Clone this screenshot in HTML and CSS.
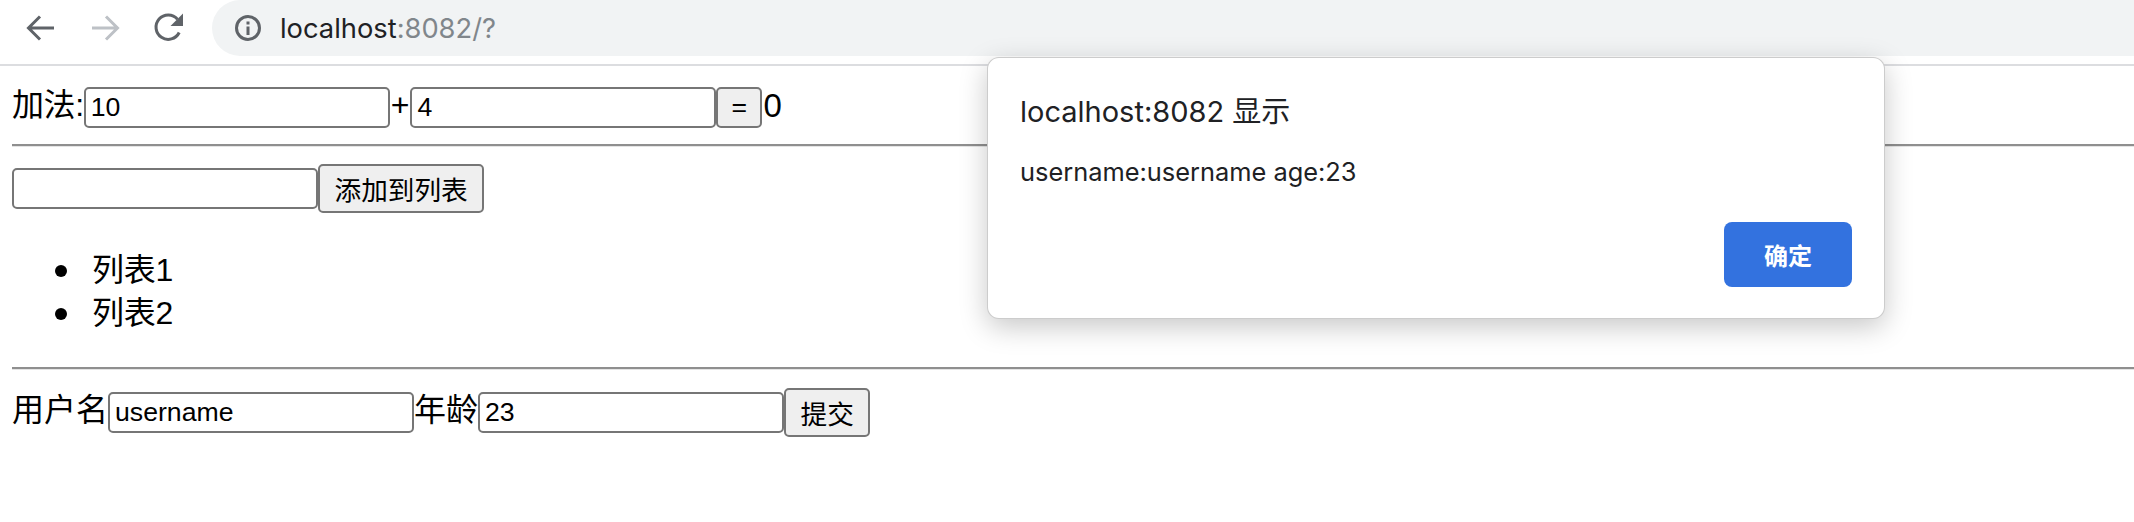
FILE: index.html
```html
<!DOCTYPE html>
<html lang="zh">
<head>
<meta charset="utf-8">
<title>localhost:8082</title>
<link rel="stylesheet" href="styles.css">
</head>
<body>
<header class="toolbar">
  <div class="nav">
    <svg class="nav-icon" viewBox="0 0 32 32"><path class="stroke dark" d="M29 16H4M15 4.500 3.500 16 15 27.500"/></svg>
    <svg class="nav-icon" viewBox="0 0 32 32"><path class="stroke light" d="M3 16H28M17 4.500 28.500 16 17 27.500"/></svg>
    <svg class="nav-icon" viewBox="0 0 32 32"><path class="stroke dark" d="M26.200 20.500A12.200 12.200 0 1 1 24.500 7.200"/><path class="fill-dark" d="M30 1.500V14H17.500Z"/></svg>
  </div>
  <div class="omnibox">
    <svg class="info" viewBox="0 0 28 28"><circle class="stroke dark" cx="14" cy="14" r="11.500"/><path class="fill-dark" d="M12.500 12.500h3V21h-3zM12.500 7.500h3v3h-3z"/></svg>
    <span class="url">localhost<span class="url-muted">:8082/?</span></span>
  </div>
</header>
<main class="page">
  <div class="row row-add">
    <span class="label label-tight">加法:</span><input class="field" value="10"><span class="label label-plus">+</span><input class="field" value="4"><button class="btn btn-eq">=</button><span class="label label-sum">0</span>
  </div>
  <hr class="rule">
  <div class="row row-list">
    <input class="field"><button class="btn">添加到列表</button>
  </div>
  <ul class="items">
    <li>列表1</li>
    <li>列表2</li>
  </ul>
  <hr class="rule rule-second">
  <div class="row row-form">
    <span class="label">用户名</span><input class="field" value="username"><span class="label">年龄</span><input class="field" value="23"><button class="btn">提交</button>
  </div>
</main>
<div class="dialog">
  <div class="dialog-title">localhost:8082 显示</div>
  <div class="dialog-msg">username:username age:23</div>
  <div class="dialog-actions"><button class="dialog-ok">确定</button></div>
</div>
</body>
</html>
```
FILE: styles.css
```css
* { box-sizing: border-box; }
html, body { margin: 0; padding: 0; }
body {
  background: #fff;
  color: #000;
  font-family: "Liberation Sans", "Noto Sans CJK SC", sans-serif;
  font-size: 32px;
  overflow: hidden;
}
.toolbar {
  height: 66px;
  border-bottom: 2px solid #dcdde0;
  display: flex;
  align-items: flex-start;
}
.nav {
  width: 212px;
  flex: none;
  display: flex;
  gap: 32px;
  padding: 12px 0 0 25px;
}
.nav-icon { width: 32px; height: 32px; flex: none; }
.stroke { fill: none; stroke-width: 3; }
.dark { stroke: #5f6368; }
.light { stroke: #bdc1c6; }
.fill-dark { fill: #5f6368; }
.omnibox {
  flex: 1;
  height: 56px;
  background: #f1f3f4;
  border-radius: 30px 0 0 30px;
  display: flex;
  align-items: center;
  padding-left: 22px;
  gap: 18px;
}
.info { width: 28px; height: 28px; flex: none; }
.url {
  font-family: "Inter", sans-serif;
  font-size: 27.300px;
  color: #202124;
}
.url-muted { color: #80868b; }
.page { padding-left: 12px; }
.row { display: flex; align-items: center; height: 49px; }
.label { line-height: 43px; padding-bottom: 4px; }
.label-tight { letter-spacing: -.4px; }
.label-plus { margin: 0 1px; }
.label-sum { margin-left: 1px; font-size: 33px; }
.row-add { margin-top: 18px; height: 47px; }
.row-list { margin-top: 17px; }
.row-form { margin-top: 18px; }
.field {
  width: 306px;
  height: 41px;
  border: 2px solid #767676;
  border-radius: 5px;
  padding: 2px 5px;
  font-family: "Liberation Sans", sans-serif;
  font-size: 26.670px;
  background: #fff;
  color: #000;
  flex: none;
}
.btn {
  height: 49px;
  border: 2px solid #767676;
  border-radius: 5px;
  background: #efefef;
  color: #000;
  padding: 0 14.500px;
  font-family: "Liberation Sans", "Noto Sans CJK SC", sans-serif;
  font-size: 26.670px;
  flex: none;
}
.btn-eq { height: 41px; width: 46px; padding: 0; }
.rule {
  border: 0;
  height: 3px;
  margin: 13px 0 0;
  background: linear-gradient(#8f8f8f 0 2px, #e4e4e4 2px);
}
.items {
  list-style: none;
  margin: 36px 0 0;
  padding: 0 0 0 80px;
  line-height: 43px;
  letter-spacing: -.3px;
}
.items li { position: relative; }
.items li::before {
  content: "";
  position: absolute;
  left: -37px;
  top: 16px;
  width: 12px;
  height: 12px;
  border-radius: 50%;
  background: #000;
}
.rule-second { margin-top: 32px; }
.dialog {
  position: absolute;
  left: 987px;
  top: 57px;
  width: 898px;
  height: 262px;
  background: #fff;
  border-radius: 12px;
  border: 1px solid rgba(0, 0, 0, .2);
  box-shadow: 0 8px 28px rgba(0, 0, 0, .22);
  padding: 34px 32px 0;
  font-family: "Inter", "Noto Sans CJK SC", sans-serif;
  color: #202124;
}
.dialog-title { font-size: 29px; line-height: 40px; }
.dialog-msg { font-size: 25.400px; line-height: 32px; margin-top: 24px; }
.dialog-actions { display: flex; justify-content: flex-end; margin-top: 34px; }
.dialog-ok {
  width: 128px;
  height: 65px;
  border: 0;
  border-radius: 8px;
  background: #3372df;
  color: #fff;
  font-family: "Noto Sans CJK SC", sans-serif;
  font-weight: 700;
  font-size: 24px;
}
```
